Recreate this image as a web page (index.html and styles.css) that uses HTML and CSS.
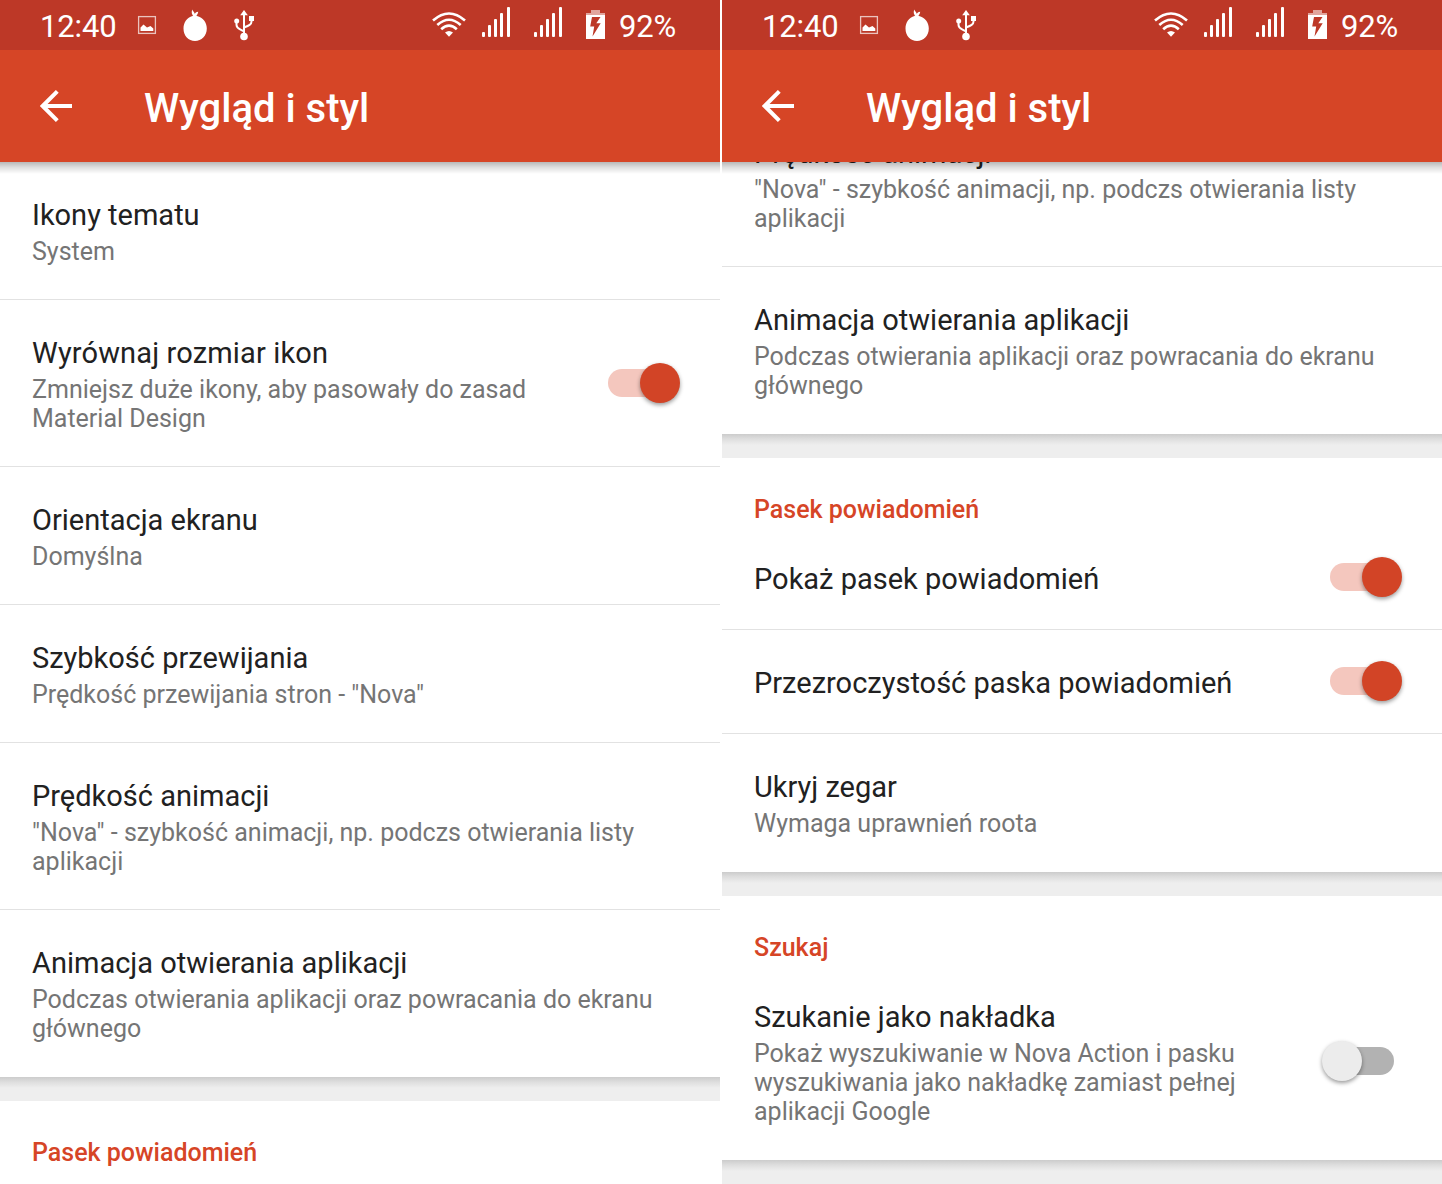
FILE: index.html
```html
<!DOCTYPE html>
<html lang="pl">
<head>
<meta charset="utf-8">
<title>Wygląd i styl</title>
<link rel="stylesheet" href="styles.css">
</head>
<body>
<svg class="defs" width="0" height="0" aria-hidden="true">
  <symbol id="notifications" viewBox="0 0 120 50">
    <rect x="2.600" y="16.600" width="16.800" height="16.800" fill="none" stroke="#fff" stroke-opacity=".7" stroke-width="1.300"/>
    <path d="M4.500 31v-3.500l3-3 3.500 3 3.500-1.500 2.800 2.500v2.500z" fill="#fff"/>
    <path d="M56.500 16l2-2.500 2.500 2.500c6 1.500 9.800 6.500 9.800 12.500C70.800 36 65.500 41 59 41s-11.500-5-11.500-12.500c0-6 3.500-11 9-12.500z" fill="#fff"/>
    <path d="M57 15.500c-1.500-1.500-1.500-3.500-.8-6 .8 2 2.300 2.500 2.500 4.500.5-1.200 1.500-2 3.500-2.300-.2 2-1 3-2.200 4.300z" fill="#fff"/>
    <path d="M108 14v22M108 31.500c-5-3-7.500-3-7.500-6.500v-4M108 27.500c5-2 7.500-3 7.500-6v-3" fill="none" stroke="#fff" stroke-width="2"/>
    <path d="M108 10l3.800 5.200h-7.600z" fill="#fff"/>
    <circle cx="108" cy="36.500" r="3.800" fill="#fff"/>
    <circle cx="100.700" cy="21" r="2.500" fill="#fff"/>
    <rect x="113" y="16" width="5" height="5" fill="#fff"/>
  </symbol>
  <symbol id="wifi" viewBox="0 0 36 50">
    <g fill="none" stroke="#fff" stroke-width="2.600">
      <path d="M2 20.500Q18 6.500 34 20.500"/>
      <path d="M6.300 25Q18 14.500 29.700 25"/>
      <path d="M10.200 29.300Q18 22 25.800 29.300"/>
    </g>
    <path d="M14 32.500q4-3.200 8 0l-4 4.200z" fill="#fff"/>
  </symbol>
  <symbol id="signal" viewBox="0 0 30 50">
    <g fill="#fff"><rect x="1" y="32" width="3" height="5" rx="1"/><rect x="7" y="25" width="3" height="12" rx="1"/><rect x="13" y="19" width="3" height="18" rx="1"/><rect x="19" y="13" width="3" height="24" rx="1"/><rect x="26" y="7" width="3" height="30" rx="1"/></g>
  </symbol>
  <symbol id="battery" viewBox="0 0 20 50">
    <path d="M6 10h9v3h5v2H1v-2h5z" fill="#fff" fill-opacity=".55"/>
    <path fill-rule="evenodd" d="M1 15h19v24H1zM7 17L5.200 26.500h4L7.500 36.500l8.200-13.200h-4.400L15.500 17z" fill="#fff"/>
  </symbol>
  <symbol id="back" viewBox="0 0 32 32">
    <path d="M32 16H3M17.300 1.400L2.700 16l14.600 14.600" fill="none" stroke="#fff" stroke-width="4"/>
  </symbol>
</svg>

<main class="screens">
  <section class="screen">
    <header class="header">
      <div class="status">
        <span class="clock">12:40</span>
        <svg class="notifications"><use href="#notifications"/></svg>
        <span class="spacer"></span>
        <svg class="wifi"><use href="#wifi"/></svg>
        <svg class="signal"><use href="#signal"/></svg>
        <svg class="signal"><use href="#signal"/></svg>
        <svg class="battery"><use href="#battery"/></svg>
        <span class="percent">92%</span>
      </div>
      <div class="toolbar"><svg class="back"><use href="#back"/></svg><h1>Wygląd i styl</h1></div>
    </header>
    <div class="list">
      <div class="card">
        <div class="row"><div class="text"><h2>Ikony tematu</h2><p>System</p></div></div>
        <div class="row"><div class="text"><h2 class="loose">Wyrównaj rozmiar ikon</h2><p>Zmniejsz duże ikony, aby pasowały do zasad Material Design</p></div><span class="switch on"></span></div>
        <div class="row"><div class="text"><h2>Orientacja ekranu</h2><p>Domyślna</p></div></div>
        <div class="row"><div class="text"><h2>Szybkość przewijania</h2><p>Prędkość przewijania stron - "Nova"</p></div></div>
        <div class="row"><div class="text"><h2>Prędkość animacji</h2><p>"Nova" - szybkość animacji, np. podczs otwierania listy aplikacji</p></div></div>
        <div class="row"><div class="text"><h2>Animacja otwierania aplikacji</h2><p>Podczas otwierania aplikacji oraz powracania do ekranu głównego</p></div></div>
      </div>
      <div class="card continues"><h3>Pasek powiadomień</h3></div>
    </div>
  </section>

  <section class="screen">
    <header class="header">
      <div class="status">
        <span class="clock">12:40</span>
        <svg class="notifications"><use href="#notifications"/></svg>
        <span class="spacer"></span>
        <svg class="wifi"><use href="#wifi"/></svg>
        <svg class="signal"><use href="#signal"/></svg>
        <svg class="signal"><use href="#signal"/></svg>
        <svg class="battery"><use href="#battery"/></svg>
        <span class="percent">92%</span>
      </div>
      <div class="toolbar"><svg class="back"><use href="#back"/></svg><h1>Wygląd i styl</h1></div>
    </header>
    <div class="list scrolled">
      <div class="card">
        <div class="row"><div class="text"><h2>Prędkość animacji</h2><p>"Nova" - szybkość animacji, np. podczs otwierania listy aplikacji</p></div></div>
        <div class="row"><div class="text"><h2>Animacja otwierania aplikacji</h2><p>Podczas otwierania aplikacji oraz powracania do ekranu głównego</p></div></div>
      </div>
      <div class="card">
        <h3>Pasek powiadomień</h3>
        <div class="row"><div class="text"><h2>Pokaż pasek powiadomień</h2></div><span class="switch on"></span></div>
        <div class="row"><div class="text"><h2>Przezroczystość paska powiadomień</h2></div><span class="switch on"></span></div>
        <div class="row"><div class="text"><h2>Ukryj zegar</h2><p>Wymaga uprawnień roota</p></div></div>
      </div>
      <div class="card">
        <h3>Szukaj</h3>
        <div class="row"><div class="text"><h2>Szukanie jako nakładka</h2><p>Pokaż wyszukiwanie w Nova Action i pasku wyszukiwania jako nakładkę zamiast pełnej aplikacji Google</p></div><span class="switch"></span></div>
      </div>
    </div>
  </section>
</main>
</body>
</html>
```
FILE: styles.css
```css
* { box-sizing: border-box; }
body { margin: 0; background: #fff; font-family: Roboto, sans-serif; overflow: hidden; }
h1, h2, h3, p { margin: 0; }
.defs { display: block; }
svg { flex: none; }

.screens { display: flex; gap: 2px; width: 1442px; height: 1184px; }
.screen { width: 720px; height: 1184px; overflow: hidden; background: #eee; }

.header { position: relative; z-index: 1; height: 162px; }
.header::after {
  content: "";
  display: block;
  height: 12px;
  background: linear-gradient(rgba(0, 0, 0, .28), rgba(0, 0, 0, .13) 45%, transparent);
}
.status { display: flex; height: 50px; padding: 0 45px 0 40px; background: #bd3827; color: #fff; font-size: 31px; letter-spacing: -.15px; line-height: 54px; }
.clock { width: 96px; }
.spacer { flex: 1; }
.notifications { width: 120px; height: 50px; }
.wifi { width: 36px; height: 50px; margin-right: 14px; }
.signal { width: 30px; height: 50px; margin-right: 22px; }
.battery { width: 20px; height: 50px; margin-right: 14px; }
.percent { width: 56px; }

.toolbar { display: flex; align-items: center; height: 112px; padding-left: 40px; background: #d64526; color: #fff; }
.back { width: 32px; height: 32px; }
.toolbar h1 { margin: 6px 0 0 72px; font-size: 40px; font-weight: 500; line-height: 48px; }

.list.scrolled { margin-top: -62px; }
.card { background: #fff; }
.card::after {
  content: "";
  display: block;
  height: 24px;
  background: linear-gradient(#ccc, #dedede 5px, #eee 11px);
}
.card.continues { height: 100px; }
.card.continues::after { display: none; }
.card h3 { height: 68px; padding: 35px 32px 0; color: #d64526; font-size: 25px; font-weight: 500; line-height: 33px; }
.card h3 { line-height: 34px; }
.row { display: flex; align-items: center; padding: 0 40px 0 32px; border-bottom: 1px solid #e2e2e2; }
.row:last-child { border-bottom-color: #fff; }
.text { flex: 1; padding: 35px 0 32px; }
.text h2 { color: #212121; font-size: 29px; font-weight: 400; line-height: 36px; }
.text h2.loose { letter-spacing: .15px; }
.text p { padding: 4px 0 1px; color: #757575; font-size: 25px; line-height: 29px; }

.switch { position: relative; flex: none; width: 80px; height: 40px; margin-bottom: .6px; }
.switch::before, .switch::after { content: ""; position: absolute; }
.switch::before { left: 8px; top: 6px; width: 64px; height: 28px; border-radius: 14px; background: #b2b2b2; }
.switch::after { left: 0; top: 0; width: 40px; height: 40px; border-radius: 50%; background: #ececec; box-shadow: 0 2px 4px rgba(0, 0, 0, .4); }
.switch.on::before { background: #f4c7be; }
.switch.on::after { left: 40px; background: #d24426; }
```
